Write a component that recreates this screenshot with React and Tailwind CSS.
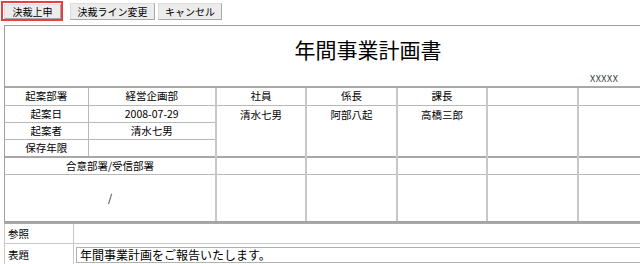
import React from 'react';

const font = { fontFamily: '"Noto Sans CJK JP", "Noto Sans", sans-serif' };

const approvers = [
  { role: '社員', name: '清水七男' },
  { role: '係長', name: '阿部八起' },
  { role: '課長', name: '高橋三郎' },
  { role: '', name: '' },
  { role: '', name: '' },
];

const Btn = ({ children, className = '' }) => (
  <button
    className={`bg-[#ececec] border border-[#dcdcdc] border-b-[#a8a8a8] border-r-[#a8a8a8] text-[10px] leading-[14px] text-black whitespace-nowrap ${className}`}
  >
    {children}
  </button>
);

const cell = 'border border-[#b8b8b8] text-center text-[10.5px] leading-[16px] text-black p-0';

const App = () => {
  return (
    <div className="w-[640px] h-[264px] overflow-hidden bg-white" style={font}>
      <div className="flex items-start h-[25px] pt-[1px] pl-[1px]">
        <div className="w-[62px] h-[20px] border-2 border-[#e8403c] pt-[1px] pl-[1px]">
          <Btn className="w-[57px] h-[15px] block">決裁上申</Btn>
        </div>
        <Btn className="w-[85px] h-[17px] mt-[2px] ml-[7px]">決裁ライン変更</Btn>
        <Btn className="w-[64px] h-[17px] mt-[2px] ml-[3px]">キャンセル</Btn>
      </div>

      <div className="ml-[4px] w-[728px] border border-[#a0a0a0]">
        <div className="h-[62px] border-b-2 border-[#a8a8a8]">
          <div className="text-center text-[21px] leading-[28px] pt-[9px] text-black">年間事業計画書</div>
          <div className="text-[9px] leading-[10px] text-[#333] pl-[585px] pt-[11px] tracking-[0.5px]">XXXXX</div>
        </div>

        <table className="border-collapse table-fixed w-[728px]">
          <colgroup>
            <col className="w-[83px]" />
            <col className="w-[128px]" />
            <col className="w-[90px]" />
            <col className="w-[91px]" />
            <col className="w-[90px]" />
            <col className="w-[91px]" />
            <col />
          </colgroup>
          <tbody>
            <tr className="h-[17px]">
              <td className={`${cell} border-t-0 border-l-0`}>起案部署</td>
              <td className={`${cell} border-t-0`}>経営企画部</td>
              {approvers.map((a, i) => (
                <td key={i} className={`${cell} border-t-0 border-x-2 border-x-[#c8c8c8]`}>{a.role}</td>
              ))}
            </tr>
            <tr className="h-[17px]">
              <td className={`${cell} border-l-0`}>起案日</td>
              <td className={cell}>2008-07-29</td>
              {approvers.map((a, i) => (
                <td key={i} rowSpan={3} className={`${cell} align-top pt-[1px] border-x-2 border-x-[#c8c8c8]`}>{a.name}</td>
              ))}
            </tr>
            <tr className="h-[17px]">
              <td className={`${cell} border-l-0`}>起案者</td>
              <td className={cell}>清水七男</td>
            </tr>
            <tr className="h-[17px]">
              <td className={`${cell} border-l-0`}>保存年限</td>
              <td className={cell}></td>
            </tr>
            <tr className="h-[18px]">
              <td colSpan={2} className={`${cell} border-l-0 border-t-2 border-t-[#a8a8a8]`}>合意部署/受信部署</td>
              {approvers.map((a, i) => (
                <td key={i} className={`${cell} border-t-2 border-t-[#a8a8a8] border-x-2 border-x-[#c8c8c8]`}></td>
              ))}
            </tr>
            <tr className="h-[46px]">
              <td colSpan={2} className={`${cell} border-l-0 border-b-0`}>/</td>
              {approvers.map((a, i) => (
                <td key={i} className={`${cell} border-b-0 border-x-2 border-x-[#c8c8c8]`}></td>
              ))}
            </tr>
          </tbody>
        </table>
      </div>

      <div className="ml-[4px] w-[728px] border-t-2 border-[#a8a8a8]">
        <div className="flex h-[20px] border-b border-[#c8c8c8]">
          <div className="w-[70px] border-x border-[#c8c8c8] text-[10.5px] leading-[19px] pl-[3px]">参照</div>
          <div className="flex-1"></div>
        </div>
        <div className="flex h-[23px] border-b border-[#c8c8c8]">
          <div className="w-[70px] border-x border-[#c8c8c8] text-[10.5px] leading-[22px] pl-[3px]">表題</div>
          <div className="flex-1 pl-[2px] pt-[3px]">
            <div className="h-[16px] border border-[#b0b0b0] text-[12px] leading-[14px] pl-[3px] text-black">
              年間事業計画をご報告いたします。
            </div>
          </div>
        </div>
      </div>
    </div>
  );
};

export default App;
